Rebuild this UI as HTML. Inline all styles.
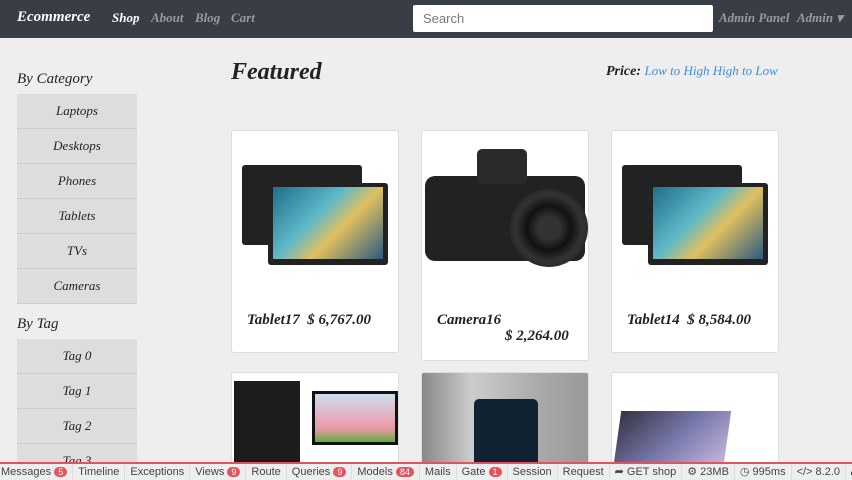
<!DOCTYPE html><html><head><style>
*{box-sizing:border-box;margin:0;padding:0}
body{width:852px;height:480px;overflow:hidden;background:#eee;font-family:"Liberation Serif",serif;font-style:italic;position:relative}
.nav{position:absolute;left:0;top:0;width:852px;height:38px;background:#393d45}
.nav span{position:absolute;top:10px;font-size:13px;font-weight:bold;color:#9a9a9a;white-space:nowrap}
.search{position:absolute;left:413px;top:5px;width:300px;height:27px;background:#fff;border-radius:2px;font-size:13px;color:#777;padding:6px 10px;font-style:normal;font-family:"Liberation Sans",sans-serif}
h3{position:absolute;font-size:15px;color:#222;font-weight:normal}
.side{position:absolute;left:17px;width:120px}
.side div{height:35px;border-bottom:1px solid #ccc;background:#ddd;text-align:center;line-height:34px;font-size:13px;color:#222}
.card{position:absolute;background:#fff;border:1px solid #ddd;border-radius:3px;width:168px}
.card .t{position:absolute;font-size:15px;color:#222;font-weight:bold;white-space:nowrap}
.dbg{position:absolute;left:-4px;top:462px;width:860px;height:18px;background:#eee;border-top:2px solid #e5525e;font-family:"Liberation Sans Narrow","Liberation Sans",sans-serif;font-style:normal;font-size:11px;color:#444;white-space:nowrap;overflow:hidden}
.dbg span{display:inline-block;padding:2px 5px;border-right:1px solid #ddd;line-height:13px}
.dbg b{background:#e5525e;color:#fff;border-radius:7px;padding:0 4px;font-weight:normal;font-size:9px}
.tab{position:absolute;background:#222;border-radius:3px}
.scr{position:absolute;background:linear-gradient(135deg,#1f6f8a,#5fb8c8 40%,#e0c060 60%,#2a5a80)}
</style></head><body>
<div class="nav">
<span style="left:17px;color:#fff;font-size:15px;top:9px">Ecommerce</span>
<span style="left:112px;color:#fff">Shop</span>
<span style="left:151px">About</span>
<span style="left:195px">Blog</span>
<span style="left:231px">Cart</span>
<div class="search">Search</div>
<span style="left:719px">Admin Panel</span>
<span style="left:797px">Admin ▾</span>
</div>
<h3 style="left:17px;top:71px">By Category</h3>
<div class="side" style="top:94px"><div>Laptops</div><div>Desktops</div><div>Phones</div><div>Tablets</div><div>TVs</div><div>Cameras</div></div>
<h3 style="left:17px;top:316px">By Tag</h3>
<div class="side" style="top:339px"><div>Tag 0</div><div>Tag 1</div><div>Tag 2</div><div>Tag 3</div></div>
<div style="position:absolute;left:231px;top:59px;font-size:24px;font-weight:bold;color:#222">Featured</div>
<div style="position:absolute;left:606px;top:63px;font-size:14px;font-weight:bold;color:#222">Price: <span style="font-weight:normal;color:#3a8ee0;font-size:13px">Low to High High to Low</span></div>

<div class="card" style="left:231px;top:130px;height:223px">
<div class="tab" style="left:10px;top:34px;width:120px;height:80px"></div>
<div class="tab" style="left:36px;top:52px;width:120px;height:82px"></div>
<div class="scr" style="left:41px;top:56px;width:110px;height:72px"></div>
<div class="t" style="left:15px;top:181px">Tablet17 &nbsp;$ 6,767.00</div></div>
<div class="card" style="left:421px;top:130px;height:231px">
<div style="position:absolute;left:3px;top:45px;width:160px;height:85px;background:#222;border-radius:10px"></div>
<div style="position:absolute;left:55px;top:18px;width:50px;height:35px;background:#2a2a2a;border-radius:5px"></div>
<div style="position:absolute;left:88px;top:58px;width:78px;height:78px;background:radial-gradient(circle,#333 20%,#111 40%,#333 60%,#111 100%);border-radius:50%"></div>
<div class="t" style="left:15px;top:181px">Camera16</div>
<div class="t" style="left:83px;top:197px">$ 2,264.00</div></div>
<div class="card" style="left:611px;top:130px;height:223px">
<div class="tab" style="left:10px;top:34px;width:120px;height:80px"></div>
<div class="tab" style="left:36px;top:52px;width:120px;height:82px"></div>
<div class="scr" style="left:41px;top:56px;width:110px;height:72px"></div>
<div class="t" style="left:15px;top:181px">Tablet14 &nbsp;$ 8,584.00</div></div>
<div class="card" style="left:231px;top:372px;height:100px">
<div style="position:absolute;left:2px;top:8px;width:66px;height:90px;background:#1c1c1c"></div>
<div style="position:absolute;left:80px;top:18px;width:86px;height:54px;background:#111;padding:3px"><div style="width:100%;height:100%;background:linear-gradient(#cde,#e9a 70%,#6a4)"></div></div></div>
<div class="card" style="left:421px;top:372px;height:100px;background:linear-gradient(90deg,#888,#ccc 30%,#aaa 70%,#999)">
<div style="position:absolute;left:52px;top:26px;width:64px;height:80px;background:#123;border-radius:5px"></div></div>
<div class="card" style="left:611px;top:372px;height:100px">
<div style="position:absolute;left:5px;top:38px;width:110px;height:60px;background:linear-gradient(135deg,#334,#77a,#cbd);transform:skewX(-8deg)"></div></div>

<div class="dbg"><span>Messages <b>5</b></span><span>Timeline</span><span>Exceptions</span><span>Views <b>9</b></span><span>Route</span><span>Queries <b>9</b></span><span>Models <b>84</b></span><span>Mails</span><span>Gate <b>1</b></span><span>Session</span><span>Request</span><span>➦ GET shop</span><span>⚙ 23MB</span><span>◷ 995ms</span><span>&lt;/&gt; 8.2.0</span><span>▬</span></div>
</body></html>
